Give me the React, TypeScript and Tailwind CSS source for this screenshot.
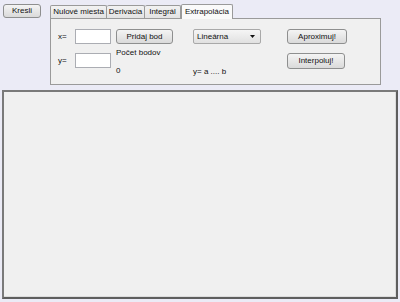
const btn =
  "flex items-center justify-center rounded-[3px] border border-[#8e8f8f] bg-gradient-to-b from-[#f4f4f4] to-[#dadada] text-[#111] leading-none";

function Tab({ label, active, w }: { label: string; active?: boolean; w: string }) {
  return active ? (
    <div
      className={`${w} h-[15px] -mb-px relative z-10 flex items-center justify-center border border-b-0 border-[#9a9a9a] bg-[#fafafa] rounded-t-[2px]`}
    >
      {label}
    </div>
  ) : (
    <div
      className={`${w} h-[13px] flex items-center justify-center border border-b-0 border-l-0 first:border-l border-[#9a9a9a] bg-gradient-to-b from-[#f2f2f2] to-[#e3e3e3] rounded-t-[2px]`}
    >
      {label}
    </div>
  );
}

function Field() {
  return <div className="w-[36px] h-[15px] border border-[#abadb3] bg-white" />;
}

export default function App() {
  return (
    <div className="w-[400px] h-[302px] bg-[#ebebf6] font-['Liberation_Sans',Arial,sans-serif] text-[8px] text-[#111] overflow-hidden">
      <div className="flex pl-[3px] pt-[3px]">
        <button className={`${btn} w-[38px] h-[14px] mt-[1px]`}>Kresli</button>

        <div className="ml-[9px] w-[331px]">
          {/* tab row */}
          <div className="flex items-end h-[15px]">
            <Tab label="Nulové miesta" w="w-[57px]" />
            <Tab label="Derivacia" w="w-[38px]" />
            <Tab label="Integrál" w="w-[36px]" />
            <Tab label="Extrapolácia" w="w-[52px]" active />
          </div>

          {/* pane */}
          <div className="h-[67px] border border-[#9a9a9a] bg-[#f0f0f0] flex pt-[10px]">
            <div className="ml-[7px] flex flex-col gap-[9px]">
              <div className="flex items-center">
                <span className="w-[17px]">x=</span>
                <Field />
              </div>
              <div className="flex items-center">
                <span className="w-[17px]">y=</span>
                <Field />
              </div>
            </div>

            <div className="ml-[5px] flex flex-col">
              <button className={`${btn} w-[57px] h-[15px]`}>Pridaj bod</button>
              <span className="mt-[4px] leading-[10px]">Počet bodov</span>
              <span className="mt-[8px] leading-[10px]">0</span>
            </div>

            <div className="ml-[20px] flex flex-col">
              <div className="w-[68px] h-[15px] flex items-center justify-between pl-[3px] pr-[5px] border border-[#a9a9a9] rounded-[2px] bg-gradient-to-b from-[#f5f5f5] to-[#e1e1e1]">
                <span>Lineárna</span>
                <svg width="5" height="3" viewBox="0 0 5 3">
                  <path d="M0 0h5L2.5 3z" fill="#111" />
                </svg>
              </div>
              <span className="mt-[23px] leading-[10px]">y= a .... b</span>
            </div>

            <div className="ml-[26px] flex flex-col gap-[9px]">
              <button className={`${btn} w-[60px] h-[15px]`}>Aproximuj!</button>
              <button className={`${btn} w-[58px] h-[16px]`}>Interpoluj!</button>
            </div>
          </div>
        </div>
      </div>

      {/* drawing area */}
      <div className="mx-[2px] mt-[5px] h-[209px] border-2 border-t-[#7a7a7a] border-l-[#7a7a7a] border-r-[#5e5e5e] border-b-[#5e5e5e] bg-[#f0f0f0] shadow-[inset_-1px_-1px_0_#dcdcdc]" />
    </div>
  );
}
